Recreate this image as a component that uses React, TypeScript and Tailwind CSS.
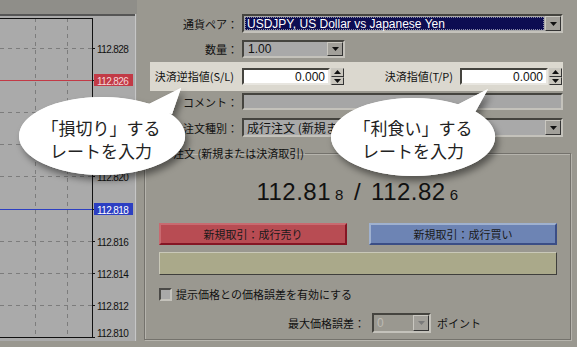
import React from 'react';

const CJK = "font-['Noto_Sans_CJK_JP',sans-serif]";
const LAT = "font-['Liberation_Sans','Noto_Sans_CJK_JP',sans-serif]";

// sunken 3D frame used by every input / select
const sunken =
  'border-2 border-t-[#45443f] border-l-[#45443f] border-b-[#c4c2bb] border-r-[#c4c2bb]';
const raised =
  'border border-t-[#cac8c1] border-l-[#cac8c1] border-b-[#333333] border-r-[#333333]';

const levels = [
  '112.828', '112.826', '112.824', '112.822', '112.820',
  '112.818', '112.816', '112.814', '112.812', '112.810',
];

const Arrow: React.FC<{ color?: string; up?: boolean }> = ({ color = '#111', up = false }) => (
  <svg width="7" height="4" viewBox="0 0 7 4">
    <polygon points={up ? '0,4 7,4 3.5,0' : '0,0 7,0 3.5,4'} fill={color} />
  </svg>
);

const DropButton: React.FC<{ disabled?: boolean }> = ({ disabled }) => (
  <div className={`w-[16px] h-full flex items-center justify-center bg-[#a2a09a] ${raised}`}>
    <Arrow color={disabled ? '#7a7a7a' : '#111'} />
  </div>
);

const Spin = () => (
  <div className="w-[13px] h-[17px] flex flex-col ml-[1px]">
    <div className={`flex-1 flex items-center justify-center bg-[#c9c6bd] ${raised}`}>
      <Arrow up />
    </div>
    <div className={`flex-1 flex items-center justify-center bg-[#c9c6bd] ${raised}`}>
      <Arrow />
    </div>
  </div>
);

const Label: React.FC<{ children: React.ReactNode }> = ({ children }) => (
  <div className={`w-[101px] text-right text-[11px] leading-[14px] text-[#111] ${CJK}`}>{children}</div>
);

const Chart = () => {
  const y = (i: number) => Math.round(34 + i * 32.1) + 0.5;
  return (
    <svg width="137" height="327" className="block">
      <rect x="0" y="0" width="137" height="327" fill="#aaaaaa" />
      <rect x="0" y="0" width="137" height="2" fill="#555555" />
      <rect x="135" y="0" width="1" height="327" fill="#c6c6c6" />
      <rect x="136" y="0" width="1" height="327" fill="#9c9b96" />
      {/* grid */}
      {[35.5, 67.5].map((x) => (
        <line key={x} x1={x} y1={4} x2={x} y2={323} stroke="#7c7c7c" strokeDasharray="4 4" />
      ))}
      {levels.map((_, i) => (
        <line key={i} x1={0} y1={y(i)} x2={92} y2={y(i)} stroke="#7c7c7c" strokeDasharray="4 4" />
      ))}
      <line x1={0} y1={y(1)} x2={92} y2={y(1)} stroke="#c23a46" />
      <line x1={0} y1={y(5)} x2={92} y2={y(5)} stroke="#2c3fc2" />
      {/* frame */}
      <line x1={0} y1={4.5} x2={92} y2={4.5} stroke="#111" />
      <line x1={92.5} y1={4} x2={92.5} y2={324} stroke="#111" />
      <line x1={0} y1={323.5} x2={92} y2={323.5} stroke="#111" />
      {levels.map((_, i) => (
        <line key={i} x1={92} y1={y(i)} x2={95} y2={y(i)} stroke="#111" />
      ))}
      <rect x="94" y={y(1) - 6.5} width="39" height="12" fill="#c23a46" />
      <rect x="94" y={y(5) - 6.5} width="39" height="12" fill="#2c3fc2" />
      {levels.map((l, i) => (
        <text
          key={l}
          x={97}
          y={i === 9 ? 323 : y(i) + 4}
          fontSize="10"
          letterSpacing="-0.6"
          fontFamily="Liberation Sans, sans-serif"
          fill={i === 1 ? '#f4d7d9' : i === 5 ? '#ffffff' : '#111'}
        >
          {l}
        </text>
      ))}
    </svg>
  );
};

const Bubbles = () => (
  <>
    <svg width="577" height="347" className="absolute inset-0 pointer-events-none">
      <defs>
        <filter id="sh" x="-20%" y="-30%" width="150%" height="170%">
          <feDropShadow dx="3" dy="5" stdDeviation="3.5" floodColor="#000" floodOpacity="0.45" />
        </filter>
      </defs>
      <g filter="url(#sh)" fill="#ffffff">
        <path d="M 102 97 A 83 39 0 1 0 102.1 97 Z" />
        <polygon points="145,106 181,88 172,114" />
        <path d="M 413 98 A 82 39 0 1 0 413.1 98 Z" />
        <polygon points="455,106 488,89 474,114" />
      </g>
      <g fill="#ffffff">
        <ellipse cx="102" cy="136" rx="83" ry="39" />
        <polygon points="145,106 181,88 172,114" />
        <ellipse cx="413" cy="137" rx="82" ry="39" />
        <polygon points="455,106 488,89 474,114" />
      </g>
    </svg>
    <div className={`absolute left-[31px] top-[116px] w-[140px] text-center text-[17px] leading-[23px] text-[#222] ${CJK}`}>
      <div>「損切り」する</div>
      <div>レートを入力</div>
    </div>
    <div className={`absolute left-[343px] top-[116px] w-[140px] text-center text-[17px] leading-[23px] text-[#222] ${CJK}`}>
      <div>「利食い」する</div>
      <div>レートを入力</div>
    </div>
  </>
);

export default function App() {
  return (
    <div className="relative w-[577px] h-[347px] overflow-hidden bg-[#9a9890] flex">
      {/* chart */}
      <div className="w-[137px] flex flex-col">
        <div className="h-[14px] bg-[#8f8e89]" />
        <Chart />
      </div>

      {/* order form */}
      <div className="flex-1 flex flex-col pt-[14px]">
        <div className="flex items-center h-[19px]">
          <Label>通貨ペア：</Label>
          <div className={`ml-[4px] w-[321px] h-full flex bg-[#a9a9a9] ${sunken}`}>
            <div className="flex-1 flex items-center m-[1px] bg-[#0d0d52] border border-dotted border-[#8a8aa8]">
              <span className={`pl-[1px] text-[12px] text-white ${LAT}`}>USDJPY, US Dollar vs Japanese Yen</span>
            </div>
            <DropButton />
          </div>
        </div>

        <div className="flex items-center h-[18px] mt-[7px]">
          <Label>数量：</Label>
          <div className={`ml-[4px] w-[103px] h-full flex bg-[#a9a9a9] ${sunken}`}>
            <span className={`flex-1 pl-[4px] text-[12px] leading-[14px] text-[#111] ${LAT}`}>1.00</span>
            <DropButton />
          </div>
        </div>

        {/* highlighted S/L - T/P band */}
        <div className="mt-[4px] ml-[13px] w-[413px] h-[29px] flex items-center bg-[#dbd8cf]">
          <div className={`w-[88px] pr-[4px] text-right text-[11px] text-[#111] ${CJK}`}>決済逆指値(S/L)</div>
          <div className={`ml-[4px] w-[88px] h-[17px] flex items-center justify-end pr-[3px] bg-white ${sunken} border-b-[#e8e6e0] border-r-[#e8e6e0]`}>
            <span className={`text-[12px] text-[#111] ${LAT}`}>0.000</span>
          </div>
          <Spin />
          <div className={`w-[112px] pr-[3px] text-right text-[11px] text-[#111] ${CJK}`}>決済指値(T/P)</div>
          <div className={`ml-[4px] w-[88px] h-[17px] flex items-center justify-end pr-[3px] bg-white ${sunken} border-b-[#e8e6e0] border-r-[#e8e6e0]`}>
            <span className={`text-[12px] text-[#111] ${LAT}`}>0.000</span>
          </div>
          <Spin />
        </div>

        <div className="flex items-center h-[17px] mt-[2px]">
          <Label>コメント：</Label>
          <div className={`ml-[4px] w-[321px] h-full bg-[#a6a6a6] ${sunken}`} />
        </div>

        <div className="flex items-center h-[19px] mt-[8px]">
          <Label>注文種別：</Label>
          <div className={`ml-[4px] w-[321px] h-full flex bg-[#a9a9a9] ${sunken}`}>
            <span className={`flex-1 pl-[3px] text-[12px] leading-[15px] text-[#111] ${CJK}`}>成行注文 (新規または決済取引)</span>
            <DropButton />
          </div>
        </div>

        {/* order group */}
        <fieldset className="mt-[8px] ml-[7px] w-[427px] h-[195px] border border-[#74726c] shadow-[inset_1px_1px_0_#b6b4ad,1px_1px_0_#b6b4ad]">
          <legend className={`ml-[27px] px-[1px] text-[11px] leading-[16px] text-[#111] ${CJK}`}>
            注文 (新規または決済取引)
          </legend>

          <div className={`mt-[19px] text-center text-[24px] leading-[24px] tracking-[0.5px] text-[#111] ${LAT}`}>
            112.81<span className="text-[15px] ml-[4px]">8</span>
            <span className="mx-[10px]">/</span>
            112.82<span className="text-[15px] ml-[4px]">6</span>
          </div>

          <div className="mt-[16px] ml-[14px] flex gap-[22px]">
            <div className="w-[188px] h-[22px] flex items-center justify-center bg-[#b84c53] border-2 border-t-[#c86a70] border-l-[#c86a70] border-b-[#851624] border-r-[#851624]">
              <span className={`text-[11px] text-[#1a1a1a] ${CJK}`}>新規取引：成行売り</span>
            </div>
            <div className="w-[188px] h-[22px] flex items-center justify-center bg-[#6d84b4] border-2 border-t-[#9fb1cf] border-l-[#9fb1cf] border-b-[#3b4e86] border-r-[#3b4e86]">
              <span className={`text-[11px] text-[#1a1a1a] ${CJK}`}>新規取引：成行買い</span>
            </div>
          </div>

          <div className="mt-[7px] ml-[14px] w-[398px] h-[23px] bg-[#aaa98a] border border-t-[#c9c8b8] border-l-[#c9c8b8] border-b-[#3f3f3c] border-r-[#3f3f3c]" />

          <div className="mt-[13px] ml-[14px] flex items-center h-[13px]">
            <div className="w-[13px] h-[13px] bg-[#a9a9a9] border-2 border-t-[#4b4a47] border-l-[#4b4a47] border-b-[#c4c2bb] border-r-[#c4c2bb]" />
            <span className={`ml-[4px] text-[11px] text-[#111] ${CJK}`}>提示価格との価格誤差を有効にする</span>
          </div>

          <div className="mt-[12px] ml-[143px] flex items-center h-[20px]">
            <span className={`text-[11px] text-[#111] ${CJK}`}>最大価格誤差：</span>
            <div className={`ml-[7px] w-[59px] h-full flex bg-[#9a9890] ${sunken}`}>
              <span className={`flex-1 pl-[3px] text-[12px] leading-[16px] text-[#bdbbb4] ${LAT}`}>0</span>
              <DropButton disabled />
            </div>
            <span className={`ml-[6px] text-[11px] text-[#111] ${CJK}`}>ポイント</span>
          </div>
        </fieldset>
      </div>

      <Bubbles />
    </div>
  );
}
